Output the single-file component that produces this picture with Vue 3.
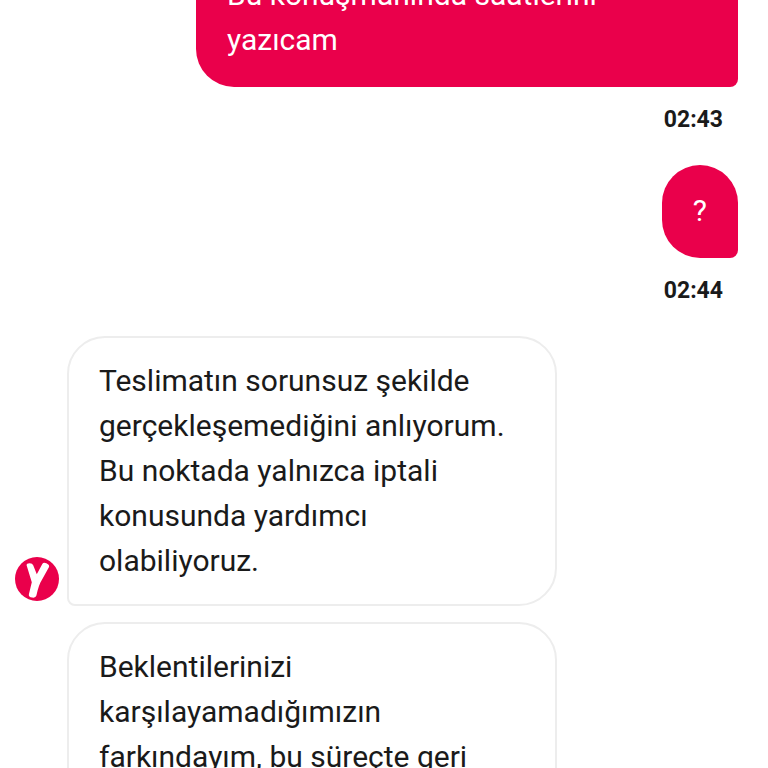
<script setup>
const sent = [
  { id: 1, lines: ['Bu konuşmanında saatlerini', 'yazıcam'], time: '02:43', continued: true },
  { id: 2, lines: ['?'], time: '02:44', continued: false },
]

const received = [
  {
    id: 3,
    avatar: true,
    lines: [
      'Teslimatın sorunsuz şekilde',
      'gerçekleşemediğini anlıyorum.',
      'Bu noktada yalnızca iptali',
      'konusunda yardımcı',
      'olabiliyoruz.',
    ],
  },
  {
    id: 4,
    avatar: false,
    lines: ['Beklentilerinizi', 'karşılayamadığımızın', 'farkındayım, bu süreçte geri'],
  },
]
</script>

<template>
  <main class="chat">
    <article v-for="m in sent" :key="m.id" class="sent" :class="{ continued: m.continued }">
      <p class="bubble pink">
        <span v-for="line in m.lines" :key="line" class="line">{{ line }}</span>
      </p>
      <time class="time">{{ m.time }}</time>
    </article>

    <article v-for="m in received" :key="m.id" class="received">
      <div class="avatar">
        <svg v-if="m.avatar" viewBox="0 0 44 44" role="img" aria-label="Y">
          <circle cx="22" cy="22" r="22" fill="#ea004b" />
          <path
            d="M11.6 8.2Q11.4 6.3 14.6 6.2Q17.4 6.1 18.2 8.2L21.8 17.2L27.3 6.9Q28.4 4.9 31.4 6.2Q35 7.9 33.9 10.2L25.3 25.8Q23.8 29 22.6 33.6L21.4 38.6Q20.7 41.2 17.2 40.6Q13.3 40 13.9 37.2L16.8 25.2Z"
            fill="#fff"
          />
        </svg>
      </div>
      <p class="bubble outlined" :class="{ open: !m.avatar }">
        <span v-for="line in m.lines" :key="line" class="line">{{ line }}</span>
      </p>
    </article>
  </main>
</template>

<style>
body {
  margin: 0;
  background: #fff;
}
</style>

<style scoped>
.chat {
  height: 100vh;
  overflow: hidden;
  font-family: Roboto, "Liberation Sans", sans-serif;
  color: #1a1a1a;
}
.sent {
  display: flex;
  flex-direction: column;
  align-items: flex-end;
  padding: 0 30px 0 196px;
  margin-bottom: 31px;
}
.continued {
  margin-top: -28px;
}
.bubble {
  margin: 0;
  box-sizing: border-box;
  font-size: 30px;
  line-height: 45px;
}
.line {
  display: block;
  white-space: nowrap;
}
.pink {
  padding: 23px 31px 25px;
  border-radius: 38px 38px 8px 38px;
  background: #ea004b;
  color: #fff;
}
.continued .pink {
  width: 100%;
  padding-top: 0;
  border-top-left-radius: 0;
  border-top-right-radius: 0;
}
.time {
  margin: 18px 15px 0 0;
  font-size: 23px;
  line-height: 29px;
  font-weight: 700;
}
.received {
  display: flex;
  align-items: flex-end;
  gap: 8px;
  padding: 0 211px 0 15px;
  margin-bottom: 16px;
}
.avatar {
  flex: none;
  width: 44px;
  padding-bottom: 5px;
}
.avatar svg {
  display: block;
  width: 100%;
}
.outlined {
  flex: 1;
  min-width: 0;
  padding: 20px 30px 21px;
  border: 2px solid #ededed;
  border-radius: 38px 38px 38px 8px;
}
.open {
  padding-bottom: 40px;
}
</style>
